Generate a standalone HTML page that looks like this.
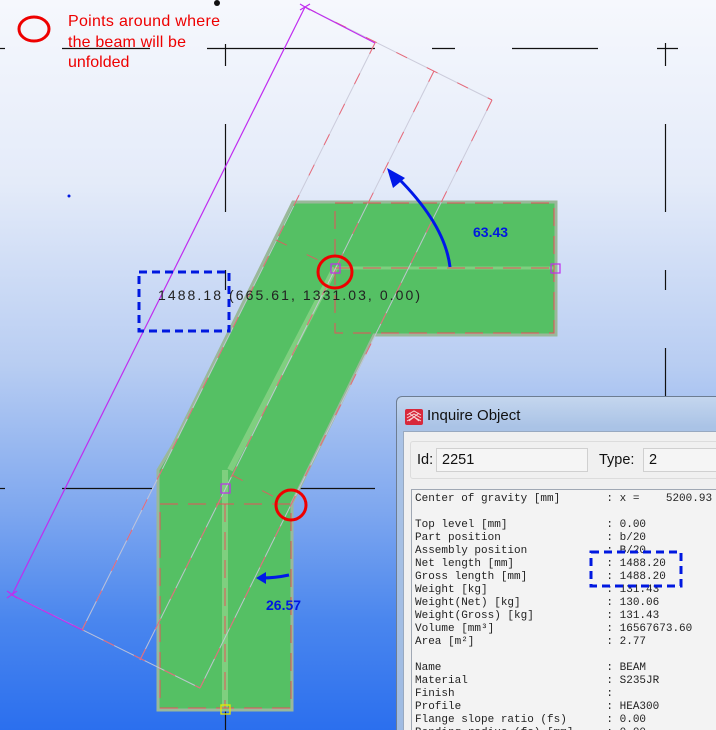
<!DOCTYPE html>
<html><head><style>
html,body{margin:0;padding:0;width:716px;height:730px;overflow:hidden}
body{position:relative;background:linear-gradient(to bottom,#f6f8fd 0%,#e4ebf9 25%,#b8cdf2 50%,#7ea7ef 70%,#4a86ee 85%,#2b6fee 100%);font-family:"Liberation Sans",sans-serif}
svg{position:absolute;left:0;top:0}
.dlg{position:absolute;left:396px;top:396px;width:330px;height:340px;border:1px solid #6d7d92;border-radius:6px 0 0 0;background:linear-gradient(to bottom,#c4d6ee,#aac3e6 30px,#9fbbe2);}
.title{position:absolute;left:30px;top:10px;font-size:15px;color:#111}
.ic{position:absolute;left:8px;top:12px;width:18px;height:16px;background:#d8283a;border-radius:2px;overflow:hidden}
.body{position:absolute;left:6px;top:34px;right:0;bottom:0;background:#f0f0f0;border:1px solid #98a9c0}
.row{position:absolute;left:6px;top:9px;right:0;height:36px;border:1px solid #dcdcdc;border-radius:3px;background:#f0f0f0}
.lbl{position:absolute;font-size:14.5px;color:#111;top:10px}
.box{position:absolute;top:6px;height:22px;background:#f5f5f5;border:1px solid #d0d0d0;font-size:14.5px;line-height:22px;padding-left:5px;color:#111}
.list{position:absolute;left:7px;top:57px;right:0;bottom:0;background:#f3f3f3;border:1px solid #a0a8b4;border-right:none}
pre{margin:0;position:absolute;left:3px;top:3px;font-family:"Liberation Mono",monospace;font-size:11px;line-height:13px;color:#222}
</style></head><body>
<svg width="716" height="730" viewBox="0 0 716 730">
<g stroke="#111" stroke-width="1.2">
<line x1="0" y1="48.5" x2="5" y2="48.5"/><line x1="62" y1="48.5" x2="150" y2="48.5"/><line x1="207" y1="48.5" x2="375" y2="48.5"/><line x1="432" y1="48.5" x2="455" y2="48.5"/><line x1="512" y1="48.5" x2="598" y2="48.5"/><line x1="657" y1="48.5" x2="678" y2="48.5"/>
<line x1="665.5" y1="43" x2="665.5" y2="66"/><line x1="665.5" y1="124" x2="665.5" y2="212"/><line x1="665.5" y1="270" x2="665.5" y2="290"/><line x1="665.5" y1="348" x2="665.5" y2="400"/>
<line x1="225.5" y1="44" x2="225.5" y2="66"/><line x1="225.5" y1="124" x2="225.5" y2="212"/><line x1="225.5" y1="270" x2="225.5" y2="290"/><line x1="225.5" y1="348" x2="225.5" y2="730"/>
<line x1="0" y1="488.5" x2="5" y2="488.5"/><line x1="62" y1="488.5" x2="152" y2="488.5"/><line x1="207" y1="488.5" x2="235" y2="488.5"/><line x1="287" y1="488.5" x2="375" y2="488.5"/>
</g>
<circle cx="217" cy="3" r="3" fill="#111"/>
<!-- green shape -->
<path d="M293,202 L556,202 L556,335 L374,335 L292,503 L292,710 L158,710 L158,470 L173,445 Z" fill="#55c064" stroke="#9ab89a" stroke-width="3"/>
<line x1="225" y1="470" x2="225" y2="710" stroke="#7fcf7f" stroke-width="6"/>
<line x1="230" y1="470" x2="335" y2="268" stroke="#7fcf7f" stroke-width="6"/>
<line x1="335" y1="268" x2="556" y2="268" stroke="#7fcf7f" stroke-width="3"/>
<g fill="none" stroke="#e8505a" stroke-width="1" stroke-dasharray="18,10">
<rect x="335" y="203" width="219" height="130"/>
<line x1="335" y1="268" x2="556" y2="268"/>
<rect x="160" y="504" width="131" height="204"/>
<line x1="225" y1="504" x2="225" y2="708"/>
</g>
<g fill="none" stroke="#c8c8d8" stroke-width="1" opacity="0.9">
<line x1="305" y1="7" x2="492" y2="100"/><line x1="492" y1="100" x2="200" y2="688"/><line x1="375" y1="43" x2="82" y2="630"/><line x1="434" y1="71" x2="140" y2="660"/><line x1="12" y1="595" x2="200" y2="688"/>
</g>
<g fill="none" stroke="#f05060" stroke-width="1" stroke-dasharray="12,22" opacity="0.8">
<line x1="305" y1="7" x2="492" y2="100"/><line x1="492" y1="100" x2="200" y2="688"/><line x1="375" y1="43" x2="82" y2="630"/><line x1="434" y1="71" x2="140" y2="660"/><line x1="12" y1="595" x2="200" y2="688"/>
<line x1="232" y1="475" x2="290" y2="505"/><line x1="276" y1="240" x2="335" y2="268"/>
</g>
<g stroke="#c02cf0" stroke-width="1.2" fill="none">
<line x1="305" y1="7" x2="12" y2="595"/><line x1="305" y1="7" x2="375" y2="43"/><line x1="12" y1="595" x2="82" y2="630"/>
<path d="M300,4l10,6M310,4l-10,6M7,591l10,7M17,591l-10,7"/>
<rect x="331" y="264" width="9" height="9"/><rect x="551" y="264" width="9" height="9"/><rect x="221" y="484" width="9" height="9"/>
</g>
<rect x="221" y="705" width="9" height="9" fill="none" stroke="#e8e800" stroke-width="1.3"/>
<g fill="none" stroke="#e00" stroke-width="3">
<ellipse cx="34" cy="29" rx="15" ry="12"/><ellipse cx="335" cy="272" rx="17" ry="16"/><ellipse cx="291" cy="505" rx="15" ry="15"/>
</g>
<g fill="none" stroke="#0018e0" stroke-width="3" stroke-dasharray="8,5">
<rect x="139" y="272" width="90" height="59"/>
</g>
<path d="M450,267 Q445,225 398,178" fill="none" stroke="#0018e8" stroke-width="3"/>
<path d="M387,168 L405,178 L393,188 Z" fill="#0018e8"/>
<path d="M289,575 Q275,578 262,578" fill="none" stroke="#0018e8" stroke-width="3"/>
<path d="M256,578 L266,572 L266,584 Z" fill="#0018e8"/>
<circle cx="69" cy="196" r="1.5" fill="#0018e0"/>
<text x="473" y="237" font-family="Liberation Sans" font-weight="bold" font-size="14" fill="#0018e0">63.43</text>
<text x="266" y="610" font-family="Liberation Sans" font-weight="bold" font-size="14" fill="#0018e0">26.57</text>
<text x="158" y="300" font-family="Liberation Sans" font-size="14" fill="#222" textLength="262" lengthAdjust="spacing">1488.18 (665.61, 1331.03, 0.00)</text>
<g font-family="Liberation Sans" font-size="16" fill="#ee0000">
<text x="68" y="26" textLength="152">Points around where</text><text x="68" y="47" textLength="118">the beam will be</text><text x="68" y="67">unfolded</text>
</g>
</svg>
<div class="dlg">
<div class="ic"><svg width="18" height="16"><path d="M2,6 L9,2 L16,6 M2,9 L9,5 L16,9 M2,12 L9,8 L16,12 M4,4 L14,12 M14,4 L4,12" stroke="#fff" stroke-width="1" fill="none" opacity="0.8"/></svg></div>
<div class="title">Inquire Object</div>
<div class="body">
<div class="row">
<span class="lbl" style="left:6px">Id:</span>
<div class="box" style="left:25px;width:145px">2251</div>
<span class="lbl" style="left:188px">Type:</span>
<div class="box" style="left:232px;width:100px">2</div>
</div>
<div class="list"><pre>Center of gravity [mm]       : x =    5200.93

Top level [mm]               : 0.00
Part position                : b/20
Assembly position            : B/20
Net length [mm]              : 1488.20
Gross length [mm]            : 1488.20
Weight [kg]                  : 131.43
Weight(Net) [kg]             : 130.06
Weight(Gross) [kg]           : 131.43
Volume [mm³]                 : 16567673.60
Area [m²]                    : 2.77

Name                         : BEAM
Material                     : S235JR
Finish                       :
Profile                      : HEA300
Flange slope ratio (fs)      : 0.00
Bending radius (fs) [mm]     : 0.00</pre></div>
</div>
</div>
<svg width="716" height="730" style="pointer-events:none"><rect x="591" y="552" width="90" height="34" fill="none" stroke="#0018e0" stroke-width="3" stroke-dasharray="8,5"/></svg>
</body></html>
